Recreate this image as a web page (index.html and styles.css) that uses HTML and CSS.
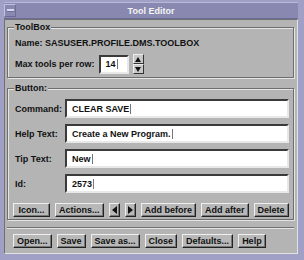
FILE: index.html
```html
<!DOCTYPE html>
<html>
<head>
<meta charset="utf-8">
<link rel="stylesheet" href="styles.css">
</head>
<body>
<div class="win">
  <div class="titlebar">
    <div class="menubtn"><span class="dash"></span></div>
    <div class="title">Tool Editor</div>
  </div>
  <div class="client">
    <fieldset class="group g1">
      <legend>ToolBox</legend>
      <div class="name">Name: SASUSER.PROFILE.DMS.TOOLBOX</div>
      <div class="maxrow">
        <span class="lbl">Max tools per row:</span>
        <div class="field small">14<span class="caret"></span></div>
        <div class="spin">
          <div class="sbtn"><span class="tri up"></span></div>
          <div class="sbtn"><span class="tri down"></span></div>
        </div>
      </div>
    </fieldset>
    <fieldset class="group g2">
      <legend>Button:</legend>
      <div class="form">
        <div class="lbl">Command:</div><div class="field">CLEAR SAVE<span class="caret"></span></div>
        <div class="lbl">Help Text:</div><div class="field">Create a New Program.<span class="caret"></span></div>
        <div class="lbl">Tip Text:</div><div class="field">New<span class="caret"></span></div>
        <div class="lbl">Id:</div><div class="field">2573<span class="caret"></span></div>
      </div>
      <div class="btnrow">
        <div class="btn wide">Icon...</div>
        <div class="btn">Actions...</div>
        <div class="btn arrow"><span class="tri left"></span></div>
        <div class="btn arrow"><span class="tri right"></span></div>
        <div class="btn">Add before</div>
        <div class="btn">Add after</div>
        <div class="btn">Delete</div>
      </div>
    </fieldset>
    <div class="sep"></div>
    <div class="btnrow bottom">
      <div class="btn">Open...</div>
      <div class="btn">Save</div>
      <div class="btn">Save as...</div>
      <div class="btn">Close</div>
      <div class="btn">Defaults...</div>
      <div class="btn">Help</div>
    </div>
  </div>
</div>
</body>
</html>
```

FILE: styles.css
```css
html, body {
  margin: 0;
  padding: 0;
  background: #a0a0c6;
}
.win {
  width: 304px;
  height: 260px;
  box-sizing: border-box;
  background: #a0a0c6;
  padding: 2px 6px 6px 4px;
  display: flex;
  flex-direction: column;
  font-family: "Liberation Sans", Arial, sans-serif;
  font-size: 9px;
  font-weight: bold;
  color: #111;
}
.titlebar {
  height: 15px;
  flex: none;
  display: flex;
  align-items: center;
  background: #8888b0;
  border-top: 1px solid #b8b8d8;
  border-bottom: 1px solid #6c6c94;
}
.menubtn {
  width: 12px;
  height: 13px;
  box-sizing: border-box;
  border-top: 1px solid #c0c0e0;
  border-left: 1px solid #c0c0e0;
  border-right: 1px solid #6c6c94;
  border-bottom: 1px solid #6c6c94;
  display: flex;
  align-items: center;
  justify-content: center;
}
.dash {
  width: 7px;
  height: 2px;
  background: #d8d8ee;
  border-bottom: 1px solid #6c6c94;
}
.title {
  flex: 1;
  text-align: center;
  color: #f4f4f4;
  font-size: 9px;
  padding-right: 12px;
}
.client {
  flex: 1;
  background: #b4b4b4;
  border-top: 1px solid #707070;
  border-left: 1px solid #707070;
  border-right: 1px solid #e2e2e2;
  border-bottom: 1px solid #e2e2e2;
  padding: 2px 3px 0 2px;
  display: flex;
  flex-direction: column;
}
.group {
  margin: 0;
  min-width: 0;
  border: 1px solid #6e6e6e;
  box-shadow: 1px 1px 0 #e4e4e4, inset 1px 1px 0 #e4e4e4;
  padding: 0 4px 0 7px;
  box-sizing: border-box;
}
.group legend {
  padding: 0 1px;
  margin-left: -1px;
  background: #b4b4b4;
  line-height: 11px;
}
.g1 {
  height: 56px;
}
.name {
  margin-top: 5px;
  line-height: 11px;
}
.maxrow {
  display: flex;
  align-items: center;
  margin-top: 5px;
}
.maxrow .lbl {
  margin-right: 4px;
}
.field {
  height: 19px;
  box-sizing: border-box;
  background: #fff;
  border-top: 2px solid #3a3a3a;
  border-left: 2px solid #3a3a3a;
  border-right: 2px solid #e8e8e8;
  border-bottom: 2px solid #e8e8e8;
  padding-left: 5px;
  display: flex;
  align-items: center;
  color: #111;
  min-width: 0;
}
.field.small {
  width: 30px;
}
.caret {
  display: inline-block;
  width: 1px;
  height: 10px;
  background: #777;
  margin-left: 1px;
}
.spin {
  display: flex;
  flex-direction: column;
  margin-left: 4px;
}
.sbtn {
  width: 11px;
  height: 10px;
  box-sizing: border-box;
  background: #c8c8c8;
  border-top: 1px solid #eee;
  border-left: 1px solid #eee;
  border-right: 1px solid #333;
  border-bottom: 1px solid #333;
  display: flex;
  align-items: center;
  justify-content: center;
}
.tri {
  width: 0;
  height: 0;
}
.tri.up {
  border-left: 3px solid transparent;
  border-right: 3px solid transparent;
  border-bottom: 5px solid #111;
}
.tri.down {
  border-left: 3px solid transparent;
  border-right: 3px solid transparent;
  border-top: 5px solid #111;
}
.tri.left {
  border-top: 4px solid transparent;
  border-bottom: 4px solid transparent;
  border-right: 5px solid #111;
}
.tri.right {
  border-top: 4px solid transparent;
  border-bottom: 4px solid transparent;
  border-left: 5px solid #111;
}
.g2 {
  margin-top: 5px;
  height: 137px;
}
.form {
  display: grid;
  grid-template-columns: 50px minmax(0, 1fr);
  row-gap: 6px;
  align-items: center;
  margin-top: 5px;
}
.btnrow {
  display: flex;
  gap: 5px;
  margin-top: 10px;
  margin-left: -2px;
}
.btn {
  height: 14px;
  box-sizing: border-box;
  padding: 0 3px;
  display: flex;
  align-items: center;
  justify-content: center;
  background: #b8b8b8;
  border-top: 1px solid #efefef;
  border-left: 1px solid #efefef;
  border-right: 1px solid #222;
  border-bottom: 1px solid #222;
  box-shadow: inset -1px -1px 0 #777;
  white-space: nowrap;
}
.btn.wide {
  min-width: 37px;
}
.btn.arrow {
  width: 11px;
  padding: 0;
}
.sep {
  margin-top: 7px;
  height: 1px;
  background: #707070;
  border-bottom: 1px solid #e4e4e4;
}
.btnrow.bottom {
  margin-top: 5px;
  margin-left: 6px;
}
```
